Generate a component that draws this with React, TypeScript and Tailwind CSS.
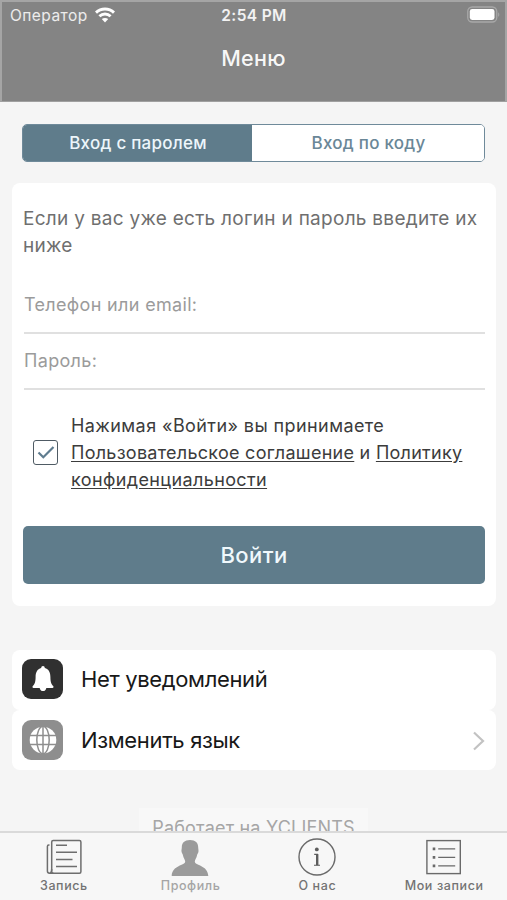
import { useState } from "react"
import type { ReactNode } from "react"
import clsx from "clsx"

type LoginMode = "password" | "code"

function StatusBar() {
  return (
    <div className="grid h-[27px] grid-cols-3 items-center pl-2 pr-[5px] text-white">
      <div className="flex items-center gap-[7px]">
        <span className="text-[15.5px] leading-5 tracking-[0.45px] text-white/85">Оператор</span>
        <svg className="-mt-[2px]" width="20" height="16" viewBox="0 0 20 16" fill="none" stroke="currentColor" strokeWidth="2.9">
          <path d="M1 5.6C6 .7 14 .7 19 5.6" />
          <path d="M4.4 9.2C7.6 6.2 12.4 6.2 15.6 9.2" />
          <path d="M10 15.4L6.8 12.1C8.6 10.5 11.4 10.5 13.2 12.1Z" fill="currentColor" stroke="none" />
        </svg>
      </div>
      <span className="pr-[2px] text-center text-[15.5px] font-semibold leading-5 tracking-[0.35px] text-white/90">2:54 PM</span>
      <svg className="-mt-[3px] justify-self-end" width="33" height="17" viewBox="0 0 33 17" fill="none">
        <rect x="0.75" y="1" width="29" height="15" rx="4.5" stroke="#a8a8a8" strokeWidth="1.3" />
        <rect x="2.8" y="3.1" width="24.7" height="10.8" rx="2.4" fill="#fff" />
        <path d="M31.2 6.2C32.7 7 32.7 10 31.2 10.8Z" fill="#a8a8a8" />
      </svg>
    </div>
  )
}

function ModeTabs({ mode, onChange }: { mode: LoginMode; onChange: (mode: LoginMode) => void }) {
  const tabs: { id: LoginMode; label: string }[] = [
    { id: "password", label: "Вход с паролем" },
    { id: "code", label: "Вход по коду" },
  ]

  return (
    <div className="mx-[22px] mt-[22px] grid h-[38px] grid-cols-[229px_1fr] overflow-hidden rounded-[5px] border-[1.5px] border-[#6f8a9a] bg-white">
      {tabs.map((tab) => (
        <button
          key={tab.id}
          onClick={() => onChange(tab.id)}
          className={clsx(
            "pl-px pt-[2px] text-[17px] font-medium tracking-[0.25px]",
            mode === tab.id ? "bg-[#5f7c8b] text-[#edf6fb]" : "bg-white text-[#6a8797]"
          )}
        >
          {tab.label}
        </button>
      ))}
    </div>
  )
}

function Field({ label, type }: { label: string; type: string }) {
  return (
    <input
      type={type}
      placeholder={label}
      className="block h-[56px] w-full border-b-2 border-[#e0e0e0] bg-transparent pb-px text-[18px] tracking-[0.33px] outline-none placeholder:text-[#9b9b9b]"
    />
  )
}

function LoginCard() {
  const [accepted, setAccepted] = useState(true)

  return (
    <section className="ml-3 mr-[11px] mt-[21px] h-[423px] rounded-[8px] bg-white px-[11px] pt-[22px]">
      <p className="whitespace-nowrap text-[19px] leading-[27px] tracking-[0.28px] text-[#6f6f6f]">
        Если у вас уже есть логин и пароль введите их
        <br />
        ниже
      </p>

      <form className="pl-px pt-[19px]">
        <Field label="Телефон или email:" type="text" />
        <Field label="Пароль:" type="password" />
      </form>

      <div className="mt-[22px] flex items-center">
        <button
          onClick={() => setAccepted(!accepted)}
          className="ml-2.5 mr-[13px] flex h-[25px] w-[25px] shrink-0 items-center justify-center rounded-[3px] border-[1.5px] border-[#4f5b64]"
        >
          {accepted && (
            <svg width="18" height="15" viewBox="0 0 18 15" fill="none" stroke="#5f7c8f" strokeWidth="2.2">
              <path d="M1.5 7.5L6.3 12.3L16.5 2" />
            </svg>
          )}
        </button>
        <p className="whitespace-nowrap text-[18px] leading-[27px] tracking-[0.27px] text-[#3c3c3c]">
          <span className="tracking-[0.41px]">Нажимая «Войти» вы принимаете</span>
          <br />
          <u className="underline-offset-2">Пользовательское соглашение</u> и <u className="underline-offset-2">Политику</u>
          <br />
          <u className="tracking-[0.38px] underline-offset-2">конфиденциальности</u>
        </p>
      </div>

      <button className="mt-[33px] block h-[58px] w-[462px] rounded-[5px] bg-[#5f7c8b] pt-px text-[22px] font-medium tracking-[0.4px] text-[#f0f8fc]">
        Войти
      </button>
    </section>
  )
}

function BellIcon() {
  return (
    <svg width="24" height="28" viewBox="0 0 24 28" fill="#fff">
      <path d="M12 1C13.1 1 13.8 1.8 13.8 3C17.8 4 19.4 7.5 19.4 12C19.4 17.6 20.6 19.5 22.2 21C22.9 21.9 22.5 22.9 21.5 22.9H2.5C1.5 22.9 1.1 21.9 1.8 21C3.4 19.5 4.6 17.6 4.6 12C4.6 7.5 6.2 4 10.2 3C10.2 1.8 10.9 1 12 1Z" />
      <path d="M8.7 22.9H15.3C15 24.8 13.8 26 12 26S9 24.8 8.7 22.9Z" />
    </svg>
  )
}

function GlobeIcon() {
  return (
    <svg width="28" height="28" viewBox="0 0 28 28" fill="none">
      <circle cx="14" cy="14" r="13.3" fill="#fff" />
      <g stroke="#8e8e8e" strokeWidth="1.5">
        <ellipse cx="14" cy="14" rx="6.2" ry="13.8" />
        <path d="M14 0V28M0 9.6H28M0 18.4H28" />
      </g>
    </svg>
  )
}

interface SettingsRowProps {
  icon: ReactNode
  label: string
  dark?: boolean
  chevron?: boolean
}

function SettingsRow({ icon, label, dark, chevron }: SettingsRowProps) {
  return (
    <div className={clsx("flex h-[60px] items-center rounded-[8px] bg-white pl-2.5 pr-[11px]", chevron && "pt-[2px]")}>
      <span
        className={clsx(
          "-mt-[2px] flex h-10 w-[41px] items-center justify-center rounded-[9px]",
          dark ? "bg-[#303030]" : "bg-[#8e8e8e]"
        )}
      >
        {icon}
      </span>
      <span className="-mt-[2px] ml-[18px] flex-1 text-[22px] tracking-[-0.35px] text-[#181818]">{label}</span>
      {chevron && (
        <svg width="13" height="20" viewBox="0 0 13 20" fill="none" stroke="#c2c2c2" strokeWidth="2.2">
          <path d="M2 1.5L11 10L2 18.5" />
        </svg>
      )}
    </div>
  )
}

function NotesIcon() {
  return (
    <svg width="38" height="38" viewBox="0 0 38 38" fill="none" stroke="#6e6e6e" strokeWidth="1.5">
      <rect x="7.7" y="2.5" width="29.2" height="32.7" rx="1.5" />
      <path d="M5.5 7H4.7Q3.4 7 3.4 8.5V33Q3.4 35.2 5.6 35.2H9.5M7.7 31Q7.7 35.2 5.3 35.2" />
      <path d="M12 7.3H23M12 14.3H33M12 21.5H28.5M12 28.5H33" />
    </svg>
  )
}

function PersonIcon() {
  return (
    <svg width="38" height="38" viewBox="0 0 38 38" fill="#9b9b9b">
      <path d="M19 2C24.5 2 27.2 4.8 27.2 9.5C27.2 11 27.8 12.2 27.4 14C27 15.5 26.2 16 26 17.4C25.6 20 23.8 21.5 23.8 23.5C23.8 27.7 37 27 37.3 38H.7C1 27 14.2 27.7 14.2 23.5C14.2 21.5 12.4 20 12 17.4C11.8 16 11 15.5 10.6 14C10.2 12.2 10.8 11 10.8 9.5C10.8 4.8 13.5 2 19 2Z" />
    </svg>
  )
}

function InfoIcon() {
  return (
    <svg width="38" height="38" viewBox="0 0 38 38" fill="none" stroke="#6a6a6a" strokeWidth="1.4">
      <circle cx="19" cy="19" r="18" />
      <circle cx="18.8" cy="11.4" r="1.9" fill="#5c5c5c" stroke="none" />
      <path d="M16.2 16.4H19.4V27M16 27.2H22" stroke="#5c5c5c" strokeWidth="1.1" />
      <path d="M19.2 16.1V27.2" stroke="#5c5c5c" strokeWidth="2.4" />
    </svg>
  )
}

function ListIcon() {
  return (
    <svg width="38" height="38" viewBox="0 0 38 38" fill="none" stroke="#6a6a6a" strokeWidth="1.4">
      <rect x="1.9" y="2.6" width="33.4" height="33" />
      <path d="M13.2 10.9H30.2M13.2 19.4H30.2M13.2 27.9H30.2" />
      <path d="M7.7 10.9H10.3M7.7 19.4H10.3M7.7 27.9H10.3" strokeWidth="2.6" />
    </svg>
  )
}

const navItems = [
  { label: "Запись", icon: <NotesIcon /> },
  { label: "Профиль", icon: <PersonIcon />, active: true },
  { label: "О нас", icon: <InfoIcon /> },
  { label: "Мои записи", icon: <ListIcon /> },
]

function BottomNav() {
  return (
    <nav className="grid h-[69px] shrink-0 grid-cols-4 border-t-2 border-[#dadada] bg-[#f7f7f7]">
      {navItems.map((item) => (
        <button
          key={item.label}
          className={clsx("flex flex-col items-center pt-[5px]", item.active ? "text-[#a5a5a5]" : "text-[#737373]")}
        >
          {item.icon}
          <span className="mt-[2px] whitespace-nowrap pl-px text-[12.5px] font-medium leading-4 tracking-[0.6px]">
            {item.label}
          </span>
        </button>
      ))}
    </nav>
  )
}

export default function App() {
  const [mode, setMode] = useState<LoginMode>("password")

  return (
    <div className="flex h-[900px] w-[507px] flex-col overflow-hidden bg-[#f5f5f5] font-['Inter','Liberation_Sans',sans-serif]">
      <header className="h-[102px] shrink-0 border-x-2 border-t-2 border-b border-x-[#a5a5a5] border-t-[#a5a5a5] border-b-[#a0a0a0] bg-[#848484]">
        <StatusBar />
        <h1 className="mt-[15px] text-center text-[21.5px] font-medium leading-7 tracking-[0.3px] text-white/95">Меню</h1>
      </header>

      <main className="min-h-0 flex-1 overflow-hidden">
        <ModeTabs mode={mode} onChange={setMode} />
        <LoginCard />
        <div className="ml-3 mr-[11px] mt-[44px]">
          <SettingsRow icon={<BellIcon />} label="Нет уведомлений" dark />
          <SettingsRow icon={<GlobeIcon />} label="Изменить язык" chevron />
        </div>
        <p className="mx-auto mt-[38px] h-10 w-[229px] bg-[#f8f8f8] pt-[6px] text-center text-[18px] leading-7 tracking-[0.2px] text-[#a6a6a6]">
          Работает на YCLIENTS
        </p>
      </main>

      <BottomNav />
    </div>
  )
}
